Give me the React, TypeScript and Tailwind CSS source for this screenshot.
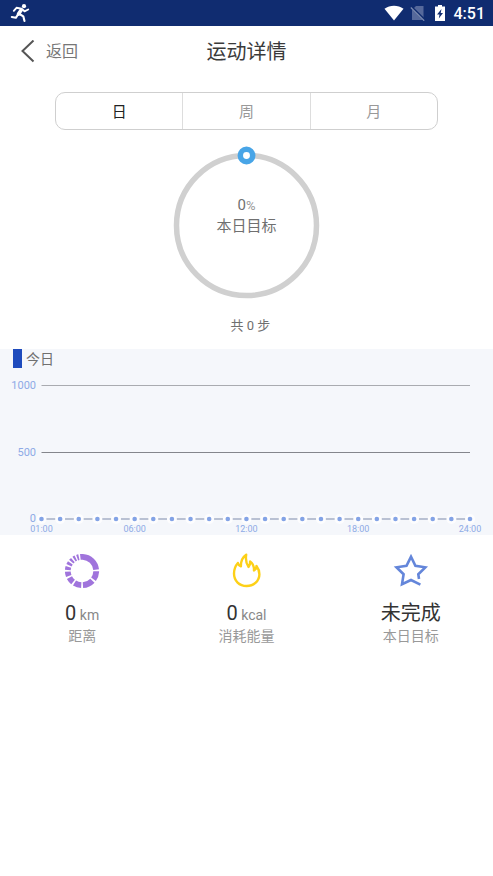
import { useState } from 'react';

const TABS = ['日', '周', '月'];

const HOURS = Array.from({ length: 24 }, (_, i) => ({
  label: `${String(i + 1).padStart(2, '0')}:00`,
  steps: 0,
}));

const LABELLED = ['01:00', '06:00', '12:00', '18:00', '24:00'];

const GRID = [
  { value: 1000, y: 17, color: '#a9abb0' },
  { value: 500, y: 84, color: '#84868c' },
];

const CHART_LEFT = 41.5;
const CHART_RIGHT = 470;
const BASELINE = 151;

const pointX = (i: number) => CHART_LEFT + (i * (CHART_RIGHT - CHART_LEFT)) / (HOURS.length - 1);

function DistanceIcon() {
  return (
    <svg className="w-9 h-9" viewBox="0 0 36 36" fill="none" aria-hidden="true">
      <circle
        cx="18"
        cy="18"
        r="14.200"
        stroke="#a074dc"
        strokeWidth="5.800"
        pathLength="360"
        strokeDasharray="81 7 35 7 43 7 29 7 23 7 18 7 13 7 11 6 9 6 8 6 7 6"
        transform="rotate(-87 18 18)"
      />
    </svg>
  );
}

function FlameIcon() {
  return (
    <svg className="w-9 h-9" viewBox="0 0 36 36" fill="none" aria-hidden="true">
      <path
        d="M18.200 1.800c-3.600 2.400-5.400 6.500-5.300 11.600-1.500-.6-2.600-1.700-3-3.400C7.400 12.800 6 16.500 6 20.600 6 28 11.400 33 18.600 33S31.400 28 31.400 21.300c0-3.200-1.100-6-2.900-8.300-.2 2.200-1 3.700-2.500 4.400.1-4-1.200-7.200-3.900-9 .1 2.600-.3 4.400-1.500 5.600C18.400 10.800 17.400 6.600 18.200 1.800Z"
        stroke="#fdd017"
        strokeWidth="2.400"
        strokeLinejoin="round"
      />
    </svg>
  );
}

function StarIcon() {
  return (
    <svg className="w-9 h-9" viewBox="0 0 36 36" fill="none" aria-hidden="true">
      <path
        d="M26 26 25.300 21.300 32.300 14.300 22.400 12.800 18 3.800 13.500 12.800 3.500 14.300 10.600 21.300 9 31.200 18 27 27.400 31.700"
        stroke="#6486da"
        strokeWidth="2.600"
      />
    </svg>
  );
}

const STATS = [
  { label: '距离', value: '0', unit: 'km', icon: DistanceIcon },
  { label: '消耗能量', value: '0', unit: 'kcal', icon: FlameIcon },
  { label: '本日目标', value: '未完成', unit: '', icon: StarIcon },
];

function StatusBar() {
  return (
    <div className="h-[26px] bg-[#102c70] flex items-center justify-between pl-2.5 pr-2 text-white">
      <svg className="w-5 h-5" viewBox="0 0 20 20" fill="none" stroke="currentColor" strokeLinecap="round" strokeLinejoin="round" aria-hidden="true">
        <circle cx="14" cy="3.200" r="2.100" fill="currentColor" stroke="none" />
        <path d="M11.200 7 8.500 11" strokeWidth="3.600" />
        <path d="M11.500 5.700 6.500 4.800 3.800 7.800M12.500 6.500 14.500 8.300 18.200 6.500" strokeWidth="1.900" />
        <path d="M9.500 11 13.300 13.300 14.500 18M8 11.500 5.800 14.800 1.800 14" strokeWidth="2.100" />
      </svg>
      <div className="flex items-center">
        <svg className="w-5 h-4" viewBox="0 0 20 16" aria-hidden="true">
          <path d="M0.500 3.800C6 -0.400 14 -0.400 19.500 3.800L10 15.500Z" fill="currentColor" />
        </svg>
        <svg className="w-4 h-4 ml-1.5" viewBox="0 0 16 16" aria-hidden="true">
          <path d="M6 1h7.500v14H2V5Z" fill="#56699b" />
          <path d="M1.200 1.800 15 15.500" stroke="#102c70" strokeWidth="2.500" />
          <path d="M0.800 2.500 14.200 15.800" stroke="#7d8bb0" strokeWidth="1.200" />
        </svg>
        <svg className="w-3 h-4 ml-2" viewBox="0 0 12 16" aria-hidden="true">
          <path d="M4 0h4v1.500h3V16H1V1.500h3Z" fill="currentColor" />
          <path d="M7.500 4 3 9.500h2.500L4.800 13.500 9 8H6.700Z" fill="#102c70" />
        </svg>
        <span className="pt-0.5 ml-2 font-[Roboto] font-medium text-base leading-6">4:51</span>
      </div>
    </div>
  );
}

function StepsChart() {
  return (
    <svg className="block w-full" viewBox="0 0 493 167" role="img" aria-label="今日步数">
      {GRID.map(g => (
        <g key={g.value}>
          <line x1={CHART_LEFT} x2={CHART_RIGHT} y1={g.y + 0.5} y2={g.y + 0.5} stroke={g.color} />
          <text x="36" y={g.y + 4} textAnchor="end" fontSize="11" fill="#8eaae6">{g.value}</text>
        </g>
      ))}
      <text x="36" y={BASELINE + 3} textAnchor="end" fontSize="11" fill="#8eaae6">0</text>
      <line x1={CHART_LEFT} x2={CHART_RIGHT} y1={BASELINE} y2={BASELINE} stroke="#a5afc6" strokeWidth="1.500" />
      {HOURS.map((h, i) => (
        <g key={h.label}>
          <circle cx={pointX(i)} cy={BASELINE} r="5" fill="#fdfdfe" />
          <circle cx={pointX(i)} cy={BASELINE} r="2.300" fill="#83a3e6" />
          {LABELLED.includes(h.label) && (
            <text x={pointX(i)} y={BASELINE + 13} textAnchor="middle" fontSize="9" fill="#8eaae6">{h.label}</text>
          )}
        </g>
      ))}
    </svg>
  );
}

export default function App() {
  const [active, setActive] = useState('日');

  return (
    <div className="min-h-screen bg-white font-[Roboto,'Noto_Sans_CJK_SC',sans-serif] text-[#707070]">
      <StatusBar />

      <header className="h-[52px] px-5 grid grid-cols-3 items-center">
        <button className="flex items-center gap-2.5 text-base text-[#777777]">
          <svg className="w-4 h-6" viewBox="0 0 16 24" fill="none" aria-hidden="true">
            <path d="M13.500 0.500 2.500 11l11 10.500" stroke="#555555" strokeWidth="2" />
          </svg>
          返回
        </button>
        <h1 className="text-center text-xl text-[#3a3a3a]">运动详情</h1>
      </header>

      <div className="mx-[55px] mt-3.5 h-[38px] flex border border-[#cfcfcf] rounded-[10px] divide-x divide-[#dddddd]">
        {TABS.map(t => (
          <button
            key={t}
            onClick={() => setActive(t)}
            className={`flex-1 pt-0.5 text-[15px] ${t === active ? 'text-[#222222]' : 'text-[#999999]'}`}
          >
            {t}
          </button>
        ))}
      </div>

      {/* Goal ring */}
      <div className="relative mt-4 flex justify-center">
        <svg className="w-[153px] h-[154px]" viewBox="0 0 153 154" fill="none" aria-hidden="true">
          <circle cx="76.500" cy="79.500" r="70" stroke="#d0d0d0" strokeWidth="5.500" />
          <circle cx="76.500" cy="9.500" r="6.200" fill="#ffffff" stroke="#48a5e7" strokeWidth="5.500" />
        </svg>
        <div className="absolute inset-0 pt-[49px] text-center text-[15px] leading-5">
          <div>0<span className="text-[13px] text-[#999999]">%</span></div>
          <div>本日目标</div>
        </div>
      </div>
      <p className="mt-4 pl-2 text-center text-[13px] leading-5">共 0 步</p>

      <section className="mt-[13px] bg-[#f5f7fb]">
        <h2 className="h-[19px] pl-[13px] flex items-center gap-1 text-sm">
          <span className="w-[9px] h-full bg-[#1e4bbd]" />
          今日
        </h2>
        <StepsChart />
      </section>

      <div className="grid grid-cols-3 pt-[18px] text-center">
        {STATS.map(s => (
          <div key={s.label} className="flex flex-col items-center">
            <s.icon />
            <div className="mt-3 text-xl leading-[25px] text-[#333333]">
              {s.value}
              {s.unit && <span className="text-sm text-[#888888]"> {s.unit}</span>}
            </div>
            <div className="text-sm leading-5 text-[#999999]">{s.label}</div>
          </div>
        ))}
      </div>
    </div>
  );
}
